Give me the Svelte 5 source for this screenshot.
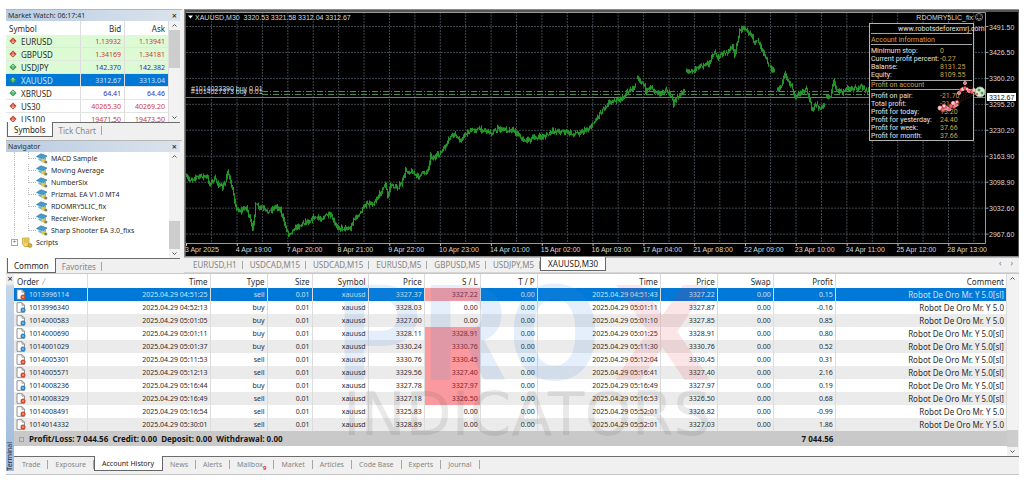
<script>
  const quotes = [
    { name: 'EURUSD', bid: '1.13932', ask: '1.13941', up: false, tone: 'red', fav: true },
    { name: 'GBPUSD', bid: '1.34169', ask: '1.34181', up: false, tone: 'red', fav: true },
    { name: 'USDJPY', bid: '142.370', ask: '142.382', up: true, tone: 'blue', fav: true },
    { name: 'XAUUSD', bid: '3312.67', ask: '3313.04', up: true, tone: 'blue', selected: true },
    { name: 'XBRUSD', bid: '64.41', ask: '64.46', up: true, tone: 'blue' },
    { name: 'US30', bid: '40265.30', ask: '40269.20', up: false, tone: 'red' },
    { name: 'US100', bid: '19471.50', ask: '19473.50', up: false, tone: 'red' }
  ];

  const experts = [
    'MACD Sample', 'Moving Average', 'NumberSix', 'PrizmaL EA V1.0 MT4',
    'RDOMRY5LIC_fix', 'Receiver-Worker', 'Sharp Shooter EA 3.0_fixs'
  ];

  const chartTabs = ['EURUSD,H1', 'USDCAD,M15', 'USDCAD,M15', 'EURUSD,M5', 'GBPUSD,M5', 'USDJPY,M5', 'XAUUSD,M30'];
  const terminalTabs = ['Trade', 'Exposure', 'Account History', 'News', 'Alerts', 'Mailbox', 'Market', 'Articles', 'Code Base', 'Experts', 'Journal'];

  const columns = [
    ['Order', 73], ['Time', 123], ['Type', 57], ['Size', 45], ['Symbol', 56], ['Price', 56], ['S / L', 56],
    ['T / P', 57], ['Time', 123], ['Price', 57], ['Swap', 56], ['Profit', 62], ['Comment', 171]
  ];
  const totalWidth = columns.reduce((sum, c) => sum + c[1], 0);

  const orders = [
    ['1013996114', '04:51:25', 'sell', '3327.37', '3327.22', '04:51:43', '3327.22', '0.15', true],
    ['1013996340', '04:52:13', 'buy', '3328.03', '0.00', '05:01:11', '3327.87', '-0.16', false],
    ['1014000583', '05:01:05', 'buy', '3327.00', '0.00', '05:01:10', '3327.85', '0.85', false],
    ['1014000690', '05:01:11', 'buy', '3328.11', '3328.91', '05:01:25', '3328.91', '0.80', true],
    ['1014001029', '05:01:37', 'buy', '3330.24', '3330.76', '05:11:30', '3330.76', '0.52', true],
    ['1014005301', '05:11:53', 'sell', '3330.76', '3330.45', '05:12:04', '3330.45', '0.31', true],
    ['1014005571', '05:12:13', 'sell', '3329.56', '3327.40', '05:16:41', '3327.40', '2.16', true],
    ['1014008236', '05:16:44', 'buy', '3327.78', '3327.97', '05:16:49', '3327.97', '0.19', true],
    ['1014008329', '05:16:49', 'sell', '3327.18', '3326.50', '05:16:53', '3326.50', '0.68', true],
    ['1014008491', '05:16:54', 'sell', '3325.83', '0.00', '05:52:01', '3326.82', '-0.99', false],
    ['1014014332', '05:30:01', 'sell', '3328.89', '0.00', '05:52:01', '3327.03', '1.86', false]
  ];

  const priceLabels = ['3491.50', '3426.50', '3360.20', '3295.20', '3230.20', '3163.90', '3098.90', '3032.60', '2967.60'];
  const timeLabels = [
    '3 Apr 2025', '4 Apr 19:00', '7 Apr 20:00', '8 Apr 21:00', '9 Apr 22:00', '10 Apr 23:00', '14 Apr 01:00', '15 Apr 02:00',
    '16 Apr 03:00', '17 Apr 04:00', '21 Apr 08:00', '22 Apr 09:00', '23 Apr 10:00', '24 Apr 11:00', '25 Apr 12:00', '28 Apr 13:00'
  ];
  const gridX = Array.from({ length: 31 }, (_, i) => 211.6 + i * 25.41);
  const gridY = Array.from({ length: 9 }, (_, i) => 26.5 + i * 25.95);

  const sessions = [
    [[186,178],[189,180],[195,177],[203,176],[207,178],[209,184],[214,179],[218,184],[222,188],[225,182],[227,170],[230,183],[233,195],[236,209],[240,211],[246,207],[249,218],[252,230],[253,222],[255,204],[258,208],[262,208],[266,212],[270,210],[276,206],[280,210],[284,224],[288,234],[292,230],[296,227],[300,225],[305,221],[308,222],[313,217],[320,219],[326,215],[331,217],[335,226],[340,228],[346,228],[350,229],[353,219],[358,216],[362,209],[366,203],[372,204],[376,199],[381,191],[385,184],[387,197],[390,185],[396,188],[401,184],[405,171],[412,172],[417,177],[422,173],[427,171],[430,156],[434,158],[440,153],[446,145],[450,136],[455,134],[459,142],[463,136],[468,132],[476,129],[484,130],[492,133],[497,129],[512,130],[518,134],[523,141],[530,139],[545,136],[553,131],[562,131],[572,134],[580,132],[588,129],[593,123],[600,112],[605,106],[610,101],[616,101],[622,98],[627,92],[632,88],[636,86]],
    [[637,80],[644,84],[645,91],[650,87],[657,94],[665,91],[669,92],[673,105],[677,96],[685,92]],
    [[686,73],[692,70],[700,66],[708,64],[713,53],[718,57],[725,53],[732,48],[734,54],[737,42],[739,30],[745,28],[750,36],[755,42],[758,42],[762,52],[766,60],[770,68],[775,71]],
    [[777,92],[781,85],[784,72],[788,82],[791,86],[795,98],[800,92],[806,90],[810,101],[811,112],[816,104],[820,109],[825,106]],
    [[826,99],[830,96],[833,79],[836,90],[842,92],[848,88],[854,89],[860,87],[866,91],[869,88]]
  ];

  // Price path with a short high-low bar at every step.
  function candles(points) {
    let d = '';
    let seed = 7;
    const rand = () => {
      seed = (seed * 16807) % 2147483647;
      return seed / 2147483647;
    };
    let prev = null;
    for (let i = 0; i < points.length - 1; i++) {
      const [x0, y0] = points[i];
      const [x1, y1] = points[i + 1];
      for (let x = x0; x < x1; x += 1) {
        const y = y0 + ((y1 - y0) * (x - x0)) / (x1 - x0) + (rand() - 0.5) * 3.4;
        const from = Math.min(prev ?? y, y) - rand() * 3;
        const to = Math.max(prev ?? y, y) + rand() * 3;
        d += `M${x + 0.5} ${from.toFixed(1)}V${to.toFixed(1)}`;
        prev = y;
      }
    }
    return d;
  }

  const account = [['Minimum stop:', '0'], ['Current profit percent:', '-0.27'], ['Balanse:', '8131.25'], ['Equity:', '8109.55']];
  const profits = [['Profit on pair:', '-21.70'], ['Total profit:', '-21.70'], ['Profit for today:', '13.20'], ['Profit for yesterday:', '24.40'], ['Profit for week:', '37.66'], ['Profit for month:', '37.66']];
  const closings = [[940,108],[943,110],[946,108],[944,106],[949,109],[951,106],[953,103],[954,107],[956,105],[957,102],[959,93],[961,90],[963,89],[965,88],[965,83],[967,89],[969,91],[972,92],[974,90]];
</script>

{#snippet scroller(kind)}
  <div class="scroll {kind}" aria-hidden="true">
    <svg viewBox="0 0 9 9"><path d="M2.5 5.5 4.5 3.5 6.5 5.5" /></svg>
    <div class="rail"><i></i></div>
    <svg viewBox="0 0 9 9"><path d="M2.5 3.5 4.5 5.5 6.5 3.5" /></svg>
  </div>
{/snippet}

<main>
  <section class="upper">
    <aside>
      <div class="panel">
        <header><span>Market Watch: 06:17:41</span><button aria-label="Close Market Watch">×</button></header>
        <div class="body watch">
          <table>
            <thead><tr><th>Symbol</th><th>Bid</th><th>Ask</th></tr></thead>
            <tbody>
              {#each quotes as q}
                <tr class:fav={q.fav} class:selected={q.selected}>
                  <td>
                    <span class="sym">
                      <svg class="mark" viewBox="0 0 9 9"><path d="M4.5 .5 8.5 4.5 4.5 8.5 .5 4.5Z" fill={q.up ? '#2f9e4d' : '#c9402c'} /><path d={q.up ? 'M4.5 2.5V6.5M2.8 4.2 4.5 2.5 6.2 4.2' : 'M4.5 2.5V6.5M2.8 4.8 4.5 6.5 6.2 4.8'} fill="none" stroke="#fff" stroke-opacity=".7" /></svg>
                      {q.name}
                    </span>
                  </td>
                  <td class={q.tone}>{q.bid}</td>
                  <td class={q.tone}>{q.ask}</td>
                </tr>
              {/each}
            </tbody>
          </table>
          {@render scroller('high')}
        </div>
        <nav class="tabs"><button class="on">Symbols</button><button>Tick Chart</button></nav>
      </div>

      <div class="panel grow">
        <header><span>Navigator</span><button aria-label="Close Navigator">×</button></header>
        <div class="body tree">
          <ul>
            {#each experts as name}
              <li class="leaf">
                <svg class="cap" viewBox="0 0 12 11"><path d="M.5 3.5 5 .8 11 3 7 6.3Z" fill="#3f9fd0" stroke="#2b7190" stroke-width=".6" /><path d="M2.5 5 7 7 10 4.5V6.5L7 9 2.5 7Z" fill="#5fb3dc" /><path d="M6 5.5 10 7 8.5 10 5 9Z" fill="#e5c94a" /><circle cx="9.8" cy="9" r="1.6" fill="#7d7f72" /></svg>
                {name}
              </li>
            {/each}
            <li class="root">
              <i class="plus">+</i>
              <svg class="cap" viewBox="0 0 12 11"><path d="M1.5 1H8V7.5L9.5 9.5H3.5L1.5 7Z" fill="#f0d766" stroke="#b8962c" stroke-width=".7" /><path d="M3 3H7M3 5H7" stroke="#b8962c" stroke-width=".6" /><circle cx="9" cy="8.5" r="2" fill="#d8b53c" stroke="#8d7420" stroke-width=".5" /></svg>
              Scripts
            </li>
          </ul>
          {@render scroller('low')}
        </div>
        <nav class="tabs"><button class="on">Common</button><button>Favorites</button></nav>
      </div>
    </aside>

    <div class="chart">
      <svg class="plot" viewBox="184 9 835 248" role="img" aria-label="XAUUSD M30 price chart">
        <rect x="184" y="9" width="835" height="248" fill="#8b8b8b" />
        <rect x="185" y="10" width="834" height="246" fill="#555" />
        <rect x="186" y="12" width="832" height="244" fill="#000" />
        <g class="grid">
          {#each gridX as x}<line x1={x} x2={x} y1="12" y2="243" />{/each}
          {#each gridY as y}<line x1="186" x2="985" y1={y} y2={y} />{/each}
        </g>
        <path d="M186 12.5H985.5V243.5H186.5" fill="none" stroke="#9a9a9a" />
        <path d="M262 91.5H985M262 94.5H985" fill="none" stroke="#4e8a50" stroke-dasharray="6 2 1 2" />
        <path d="M186 97.5H985" stroke="#6f7d86" />
        {#each sessions as s}<path d={candles(s)} stroke="#249329" fill="none" />{/each}

        <g class="labels">
          <path d="M188 15.5H193L190.5 18.5Z" fill="#fff" />
          <text x="195" y="20">XAUUSD,M30&nbsp; 3320.53 3321.58 3312.04 3312.67</text>
          <text x="191" y="91">#1014023390 buy 0.01</text>
          <text x="191" y="94">#1014027373 buy 0.01</text>
          <text x="973" y="20" text-anchor="end">RDOMRY5LIC_fix</text>
          {#each priceLabels as label, i}
            <path d="M985.5 {gridY[i]}h3" stroke="#9a9a9a" />
            <text x="989" y={gridY[i] + 3}>{label}</text>
          {/each}
          {#each timeLabels as label, i}
            <path d="M{186.5 + i * 50.82} 243v3" stroke="#bbb" />
            <text x={185 + i * 50.82} y="252">{label}</text>
          {/each}
        </g>
        <circle cx="979" cy="17" r="3.5" fill="none" stroke="#bbb" stroke-width=".7" />
        <path d="M977 18.3Q979 20 981 18.3M977.7 15.5v1M980.3 15.5v1" fill="none" stroke="#bbb" stroke-width=".7" />

        <rect x="869.5" y="23.5" width="104" height="117" fill="#000" stroke="#b4b4b4" />
        <path d="M871 33.5H972M871 44.5H972M871 80.5H972M871 89.5H972" stroke="#a5a5a5" />
        <g class="info">
          <text x="898" y="31">www.robotsdeforexmrj.com</text>
          <text class="gold" x="871" y="42">Account information</text>
          <text class="gold" x="871" y="87">Profit on account</text>
          {#each account as [k, v], i}
            <text x="871" y={53 + i * 8}>{k}</text><text class="gold" x="940" y={53 + i * 8}>{v}</text>
          {/each}
          {#each profits as [k, v], i}
            <text x="871" y={98 + i * 8}>{k}</text><text class="gold" x="940" y={98 + i * 8}>{v}</text>
          {/each}
        </g>
        <path d="M944 108 954 102 966 94M950 107 974 91M958 93 976 92M965 84 978 91M956 104 979 92" stroke="#8b2f24" stroke-width=".6" stroke-dasharray="1.5 1" />
        {#each closings as [x, y], i}
          <circle cx={x} cy={y} r={i < 6 ? 2 : 1.6} fill={i % 3 ? '#e2707a' : '#f6d3d3'} stroke={i % 2 ? '#d02d30' : '#f3b3b3'} stroke-width=".8" />
        {/each}
        <circle cx="980" cy="92" r="5" fill="#d7e8d2" stroke="#9fb49a" />
        <circle cx="979" cy="90" r="1.5" fill="#3fa047" /><circle cx="982" cy="93" r="1.5" fill="#5d9a62" /><circle cx="977" cy="94" r="1" fill="#d1393b" />
        <rect x="987" y="93" width="29" height="8" fill="#fff" />
        <text class="tag" x="989" y="100">3312.67</text>
      </svg>
      <nav class="tabs charts">
        {#each chartTabs as t, i}<button class:on={i === 6}>{t}</button>{/each}
        <span class="arrows" aria-hidden="true"><i>‹</i><i>›</i></span>
      </nav>
    </div>
  </section>

  <section class="terminal">
    <div class="strip"><button aria-label="Close Terminal">×</button><span>Terminal</span></div>
    <div class="content">
      <div class="body history">
        <table>
          <colgroup>{#each columns as c}<col style="width:{(c[1] / totalWidth) * 100}%" />{/each}</colgroup>
          <thead>
            <tr>{#each columns as c, i}<th>{c[0]}{#if i === 0}<i class="sort">&nbsp; ⁄</i>{/if}</th>{/each}</tr>
          </thead>
          <tbody>
            {#each orders as o, i}
              <tr class:selected={i === 0}>
                <td>
                  <span class="sym">
                    <svg class="doc" viewBox="0 0 10 11"><path d="M1 .7H6L8.5 3.2V10.3H1Z" fill="#fff" stroke="#777" stroke-width=".8" /><path d="M6 .7V3.2H8.5" fill="none" stroke="#777" stroke-width=".7" /><circle cx="7" cy="8" r="2.5" fill={o[2] === 'sell' ? '#d2492f' : '#2f86c6'} /><path d="M6 8H8" stroke="#fff" stroke-width=".7" /></svg>
                    {o[0]}
                  </span>
                </td>
                <td>2025.04.29 {o[1]}</td><td>{o[2]}</td><td>0.01</td><td>xauusd</td><td>{o[3]}</td>
                <td class:hit={o[8]}>{o[4]}</td><td>0.00</td><td>2025.04.29 {o[5]}</td><td>{o[6]}</td><td>0.00</td><td>{o[7]}</td>
                <td class="note">Robot De Oro Mr. Y 5.0{o[8] ? '[sl]' : ''}</td>
              </tr>
            {/each}
          </tbody>
          <tfoot>
            <tr>
              <td colspan="11"><i class="box"></i>Profit/Loss: 7 044.56&nbsp; Credit: 0.00&nbsp; Deposit: 0.00&nbsp; Withdrawal: 0.00</td>
              <td>7 044.56</td>
              <td></td>
            </tr>
          </tfoot>
        </table>
        {@render scroller('end')}
        <svg class="brand" viewBox="14 274 1004 182" aria-hidden="true">
          <text class="pro" x="336" y="380">PRO<tspan class="x" dx="12">X</tspan></text>
          <text class="ind" x="343" y="435">INDICATORS</text>
        </svg>
      </div>
      <nav class="tabs bottom">
        {#each terminalTabs as t, i}
          <button class:on={i === 2}>{t}{#if t === 'Mailbox'}<sub>9</sub>{/if}</button>
        {/each}
      </nav>
    </div>
  </section>
</main>

<style>
  :global(body) { margin: 0; background: #fff; }
  main {
    margin: 9px 5px 0 6px;
    background: #f0f0f0;
    border-bottom: 1px solid #c4c4c4;
    padding-bottom: 3px;
    font: 7px/9px "Noto Sans", "Open Sans", sans-serif;
    color: #2c2c2c;
  }
  button { all: unset; cursor: pointer; white-space: nowrap; }
  i { font-style: normal; }
  table { border-collapse: collapse; table-layout: fixed; width: 100%; }
  th { font-weight: 400; }
  th, td { padding: 0 2px 0 0; text-align: right; white-space: nowrap; overflow: hidden; }

  .upper { display: grid; grid-template-columns: 176px minmax(0, 1fr); gap: 2px; }
  aside { display: flex; flex-direction: column; gap: 3px; min-width: 0; }
  .panel { display: flex; flex-direction: column; border-top: 1px solid #b5b5b5; padding-right: 2px; }
  .grow { flex: 1; }
  .panel header {
    display: flex; justify-content: space-between; align-items: center;
    height: 11px; padding: 0 3px 0 2px;
    background: linear-gradient(90deg, #b9cde3, #dbe3ec);
  }
  header button, .strip button { font-size: 9px; color: #111; }
  .body { display: flex; background: #fff; min-height: 0; }
  .watch { height: 101px; overflow: hidden; font-size: 7px; }
  .watch table { flex: 1; align-self: flex-start; }
  .watch th { height: 14px; font-size: 8px; border-right: 1px solid #ddd; }
  .watch th, .watch td { padding-right: 3px; }
  .watch th:first-child, .watch td:first-child { text-align: left; width: 42%; padding-left: 3px; }
  .watch td { height: 12px; border-right: 1px solid #ddd; border-bottom: 1px solid #e2e6e0; }
  .watch .fav { background: #dcfad4; }
  .sym { display: flex; align-items: center; gap: 3px; }
  .watch .sym { font-size: 8px; gap: 4px; }
  .mark { width: 8px; height: 8px; flex: none; }
  .red { color: #cf3a30; }
  .blue { color: #2a2fc0; }
  .selected { background: #0078d7; color: #c9e4f8; }
  .selected .blue { color: #c9e4f8; }

  .tree { flex: 1; }
  ul { flex: 1; display: grid; grid-auto-rows: 1fr; margin: 0; padding: 0 0 10px; list-style: none; font-size: 7px; }
  li { display: flex; align-items: center; gap: 3px; position: relative; }
  .leaf { padding-left: 30px; }
  .leaf::before { content: ""; position: absolute; left: 22px; top: 0; width: 7px; height: 50%; border: dotted #b9b9b9; border-width: 0 0 1px 1px; }
  .leaf::after { content: ""; position: absolute; left: 8px; top: 0; height: 100%; border-left: 1px dotted #c4c4c4; }
  .cap { width: 12px; height: 11px; flex: none; }
  .root { padding-left: 5px; }
  .plus { width: 5px; height: 5px; border: 1px solid #aaa; font-size: 6px; line-height: 5px; text-align: center; color: #555; }

  .scroll { width: 11px; flex: none; display: flex; flex-direction: column; align-items: center; background: #f2f2f2; }
  .scroll svg { width: 9px; height: 9px; fill: none; stroke: #555; }
  .rail { flex: 1; width: 100%; display: flex; flex-direction: column; }
  .rail i { height: 38px; background: #cdcdcd; }
  .low .rail i { height: 28px; }
  .end .rail i { height: 17px; }
  .low .rail, .end .rail { justify-content: flex-end; }

  .tabs { display: flex; height: 14px; border-top: 1px solid #6d6d6d; color: #858585; }
  .tabs button { display: flex; align-items: center; padding: 0 7px; position: relative; }
  .tabs button::after { content: ""; position: absolute; right: 0; top: 3px; bottom: 2px; border-left: 1px solid #a5a5a5; }
  .tabs .on { background: #fff; color: #222; border: 1px solid #666; border-top: 0; margin-top: -1px; padding-top: 1px; }
  .tabs .on::after { display: none; }
  .panel .tabs { font-size: 8px; margin-left: 1px; }
  .panel .tabs button { padding: 0 6px; }

  .chart { min-width: 0; }
  .plot { display: block; width: 100%; }
  .grid line { stroke: #3f474f; stroke-width: 1; stroke-dasharray: 2 1; }
  .labels text { font: 7px "Liberation Sans", Arial, sans-serif; fill: #d8d8d8; }
  .info text { font: 7px Roboto, Arial, sans-serif; fill: #e4e4e4; }
  .info .gold { fill: #d0a048; }
  .tag { font: 7px "Liberation Sans", Arial, sans-serif; fill: #111; }
  .charts { font-size: 8px; border-top-color: #c9b9b9; height: 13px; padding: 0 6px 1px 2px; border-bottom: 1px solid #d6d6d6; }
  .charts button { padding: 0 6px 0 7px; }
  .charts .on { padding: 0 7px; }
  .arrows { margin-left: auto; display: flex; gap: 9px; color: #777; }

  .terminal { display: flex; border-top: 1px solid #c8c8c8; }
  .strip {
    width: 8px; flex: none; display: flex; flex-direction: column; justify-content: space-between; align-items: center;
    background: linear-gradient(#eee 10px, #c3d6ea 12px, #9fbbdc); color: #223; font-size: 7px;
  }
  .strip span { writing-mode: vertical-rl; transform: rotate(180deg); line-height: 8px; }
  .content { flex: 1; min-width: 0; }
  .history { position: relative; padding-bottom: 10px; margin-right: 1px; }
  .history table { flex: 1; }
  .history th { height: 14px; font-size: 8px; }
  .history td { height: 13px; line-height: 11px; }
  .history tfoot td { height: 15px; font-size: 8px; }
  .history .note { font-size: 8px; }
  .history th, .history td { border-right: 1px solid #dcdcdc; }
  .history th:first-child, .history td:first-child { text-align: left; padding-left: 2px; }
  .history th:first-child { padding-left: 3px; }
  .sort { color: #999; }
  .history tbody tr:nth-child(odd):not(.selected) { background: #ebebeb; }
  .history td.hit { background: #fb9a9e; color: #7a2430; }
  .history tfoot { background: #c9c9c9; font-weight: 700; color: #161616; }
  .history tfoot td { border-right: 0; }
  .history tfoot td:first-child { padding-left: 5px; }
  .box { display: inline-block; width: 3px; height: 3px; border: 1px solid #a0a0a0; margin-right: 5px; vertical-align: middle; }
  .doc { width: 10px; height: 11px; flex: none; }
  .history .scroll { margin-bottom: -10px; }
  .brand { position: absolute; inset: 0; width: 100%; height: 100%; pointer-events: none; }
  .pro { font: 700 134px Roboto, sans-serif; fill: #3f8fe0; fill-opacity: .14; }
  .pro .x { font: 700 130px "DejaVu Sans", sans-serif; fill: #e8343c; fill-opacity: .13; }
  .ind { font: 400 60px "DejaVu Sans", sans-serif; fill: #555; fill-opacity: .13; }
  .bottom { padding-left: 1px; }
  .bottom button { padding-right: 8px; }
  sub { color: #e03030; font-size: 6px; font-weight: 700; line-height: 6px; align-self: flex-end; }
</style>
